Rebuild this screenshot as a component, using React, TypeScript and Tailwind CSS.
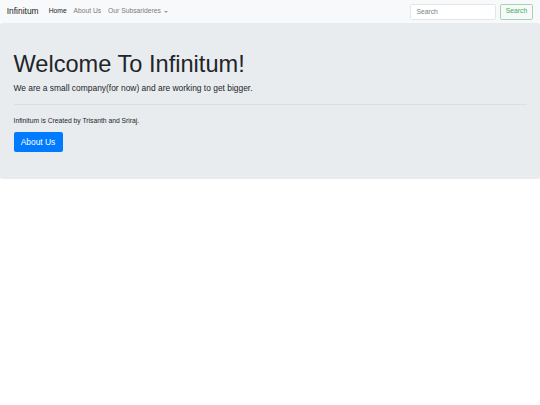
import React from "react";

export default function App() {
  return (
    <div
      className="min-h-[405px] w-[540px] bg-white text-[#212529]"
      style={{ fontFamily: '"Liberation Sans", Arial, sans-serif' }}
    >
      <nav className="flex h-[23px] items-center bg-[#f8f9fa] px-[6.75px]">
        <a className="mr-[6.75px] text-[8.44px] leading-[12.66px] text-[#1a1a1a]">Infinitum</a>
        <ul className="flex items-center text-[6.75px] leading-[10.1px]">
          <li>
            <a className="block px-[3.375px] text-[#1a1a1a]">Home</a>
          </li>
          <li>
            <a className="block px-[3.375px] text-[#7c7c7d]">About Us</a>
          </li>
          <li>
            <a className="flex items-center px-[3.375px] text-[#7c7c7d]">
              Our Subsarideres
              <span className="ml-[3px] inline-block h-0 w-0 border-x-[2px] border-t-[2px] border-x-transparent border-t-[#9a9a9b]" />
            </a>
          </li>
        </ul>
        <form className="ml-auto flex items-center">
          <input
            type="search"
            placeholder="Search"
            className="mr-[3.4px] h-[16px] w-[86px] rounded-[1.7px] border border-[#e3e6e9] bg-white px-[5px] text-[6.75px] text-[#495057] outline-none placeholder:text-[#7a7f84]"
          />
          <button
            type="button"
            className="h-[16px] rounded-[1.7px] border border-[#a1d6ae] px-[5px] text-[6.75px] text-[#3aae55]"
          >
            Search
          </button>
        </form>
      </nav>

      <div className="rounded-[2px] bg-[#e9ecef] px-[13.5px] pb-[27px] pt-[27px]">
        <h1 className="mb-[3.4px] text-[23.6px] font-light leading-[28.3px]">Welcome To Infinitum!</h1>
        <p className="text-[8.44px] leading-[12.66px]">
          We are a small company(for now) and are working to get bigger.
        </p>
        <hr className="my-[10.1px] border-0 border-t border-[#dcdfe2]" />
        <p className="mb-[6.75px] text-[6.75px] leading-[10.1px]">Infinitum is Created by Trisanth and Sriraj.</p>
        <div className="flex">
          <a className="flex h-[20px] items-center rounded-[2px] bg-[#007bff] px-[7.2px] text-[8.44px] text-white">
            About Us
          </a>
        </div>
      </div>
    </div>
  );
}
